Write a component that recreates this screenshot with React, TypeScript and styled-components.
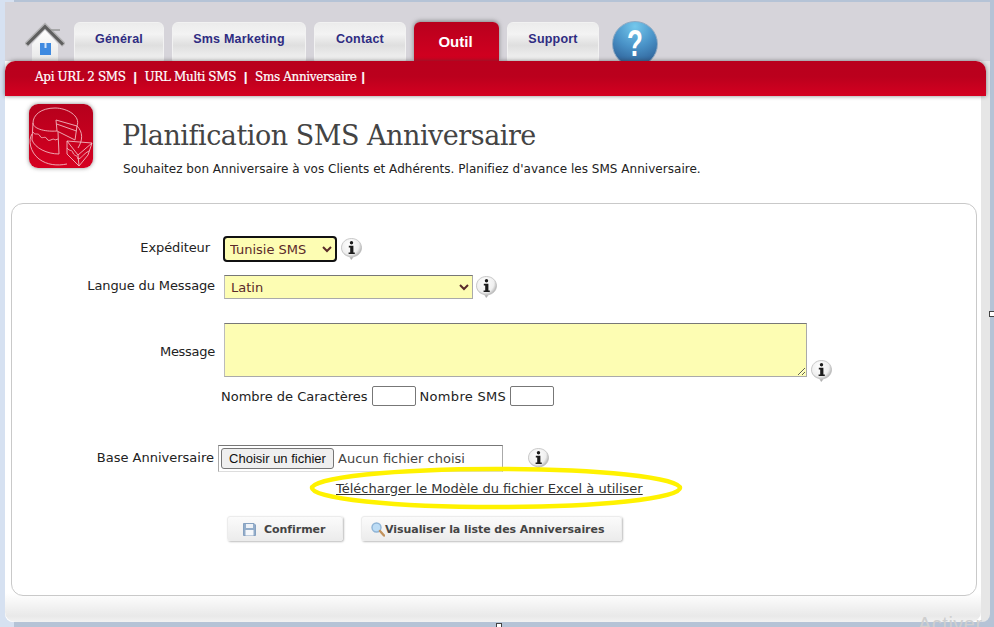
import React from "react";
import styled, { createGlobalStyle } from "styled-components";

const GlobalStyle = createGlobalStyle`
  html, body {
    margin: 0;
    padding: 0;
    background: #b5c3d6;
  }
`;

const Page = styled.div`
  position: relative;
  width: 994px;
  height: 627px;
  overflow: hidden;
  box-sizing: border-box;
  padding: 2px 4px 5px 5px;
  background: linear-gradient(90deg, #d6e1f1 0, #d6e1f1 14px, #b5c3d6 14px);
  font-family: "DejaVu Sans", Verdana, sans-serif;
  color: #222;
`;

const Shell = styled.div`
  height: 100%;
  display: flex;
  flex-direction: column;
  background: linear-gradient(90deg, #fff 0, #fff 976px, #e6e6e6 976px);
  border-radius: 0 0 8px 8px;
`;

const TopBar = styled.div`
  height: 59px;
  box-sizing: border-box;
  flex: none;
  display: flex;
  align-items: flex-start;
  padding: 20px 0 0 20px;
  background: #d6d4da;
`;

const HomeLink = styled.div`
  width: 40px;
  height: 39px;
  margin-right: 9px;
  flex: none;
`;

const Tab = styled.div<{ $width: number; $active?: boolean }>`
  width: ${(p) => p.$width}px;
  height: 39px;
  flex: none;
  box-sizing: border-box;
  margin-right: 8px;
  padding: ${(p) => (p.$active ? "12px 2px 0 0" : "9px 0 0")};
  text-align: center;
  font-family: "Liberation Sans", Arial, sans-serif;
  font-weight: 700;
  font-size: ${(p) => (p.$active ? 15 : 12.5)}px;
  letter-spacing: ${(p) => (p.$active ? 0 : 0.2)}px;
  line-height: 15px;
  color: ${(p) => (p.$active ? "#fff" : "#2f2c82")};
  border-radius: 6px 6px 0 0;
  border: ${(p) => (p.$active ? "none" : "1px solid #f2f2f2")};
  background: ${(p) =>
    p.$active
      ? "linear-gradient(180deg, #b8001d, #d30020)"
      : "linear-gradient(180deg, #ececec, #f3f3f3 30%, #dfdfdf 60%, #f2f2f2)"};
  box-shadow: ${(p) =>
    p.$active
      ? "0 -1px 4px rgba(60, 60, 60, 0.55)"
      : "0 1px 0 #2e6b2e"};
`;

const HelpBadge = styled.div`
  width: 46px;
  height: 46px;
  margin: -1px 0 0 5px;
  flex: none;
  border-radius: 50%;
  box-sizing: border-box;
  border: 1px solid #8fa9c2;
  background: radial-gradient(circle at 50% 10%, #74c8ec 0, #4a93c8 45%, #2f6299 85%);
  color: #fff;
  text-align: center;
  font-family: "Liberation Sans", Arial, sans-serif;
  font-weight: 700;
  font-size: 36px;
  line-height: 43px;
`;

const HelpMark = styled.span`
  display: inline-block;
  transform: scaleX(0.72);
`;

const RedBar = styled.nav`
  position: relative;
  height: 35px;
  flex: none;
  width: 981px;
  box-sizing: border-box;
  padding: 8px 0 0 30px;
  display: flex;
  border-radius: 10px 10px 0 0;
  background: linear-gradient(180deg, #b9001d 0, #bb001d 45%, #d40020 100%);
  box-shadow: 0 0 4px rgba(50, 50, 50, 0.6);
  font-family: "DejaVu Serif", Georgia, serif;
  font-size: 12px;
  line-height: 16px;
  font-weight: 400;
  color: #fff;
  -webkit-text-stroke: 0.2px #fff;
`;

const NavItem = styled.span`
  margin-right: 8px;
  letter-spacing: -0.35px;
  &::after {
    content: "|";
    margin-left: 8px;
    font-weight: 700;
    font-family: "Liberation Sans", sans-serif;
  }
  &:last-child::after {
    margin-left: 5px;
  }
`;

const Content = styled.div`
  flex: 1;
  width: 976px;
  box-sizing: border-box;
  padding: 7px 0 0 6px;
  display: flex;
  flex-direction: column;
  border-radius: 0 0 10px 10px;
  background: linear-gradient(180deg, #fff 0, #fff 497px, #e9e9e9 520px, #f2f2f2 100%);
`;

const TitleRow = styled.header`
  display: flex;
  height: 100px;
  flex: none;
`;

const CakeTile = styled.div`
  width: 64px;
  height: 64px;
  margin: 1px 0 0 18px;
  flex: none;
  border-radius: 9px;
  background: linear-gradient(180deg, #b5001c, #d60021);
  box-shadow: 0 0 4px rgba(60, 60, 60, 0.6);
`;

const TitleBlock = styled.div`
  margin-left: 29px;
  padding-top: 15px;
`;

const Title = styled.h1`
  margin: 0;
  font-family: "DejaVu Serif", Georgia, serif;
  font-weight: 400;
  font-size: 27px;
  line-height: 36px;
  letter-spacing: -0.48px;
  color: #444;
`;

const Subtitle = styled.p`
  margin: 7px 0 0 1px;
  font-size: 12px;
  line-height: 16px;
  letter-spacing: 0.03px;
  color: #222;
`;

const Panel = styled.form`
  position: relative;
  width: 966px;
  height: 393px;
  flex: none;
  box-sizing: border-box;
  border: 1px solid #c9c9c9;
  border-radius: 12px;
  padding-top: 33px;
  background: #fff;
`;

const Row = styled.div<{ $top?: number; $height: number }>`
  display: flex;
  align-items: center;
  margin-top: ${(p) => p.$top ?? 0}px;
  height: ${(p) => p.$height}px;
`;

const Label = styled.label<{ $end?: number; $raise?: number; $track?: number }>`
  width: ${(p) => p.$end ?? 203}px;
  flex: none;
  text-align: right;
  font-size: 13px;
  line-height: 16px;
  letter-spacing: ${(p) => p.$track ?? 0}px;
  color: #222;
  position: relative;
  top: ${(p) => -(p.$raise ?? 0)}px;
`;

const Field = styled.select<{ $width: number; $focus?: boolean }>`
  width: ${(p) => p.$width}px;
  height: 24px;
  margin-left: ${(p) => (p.$focus ? 14 : 9)}px;
  box-sizing: border-box;
  padding: 0 0 0 ${(p) => (p.$focus ? 1 : 2)}px;
  font-family: "DejaVu Sans", Verdana, sans-serif;
  font-size: 13px;
  color: #5a2a2a;
  background-color: #fdfdb3;
  border: 1px solid #aaa;
  border-top-color: #777;
  border-left-color: #bbb;
  border-radius: 0;
  ${(p) => p.$focus && "outline: 2px solid #111; outline-offset: -1px; border-radius: 3px;"}
`;

const MessageArea = styled.textarea`
  width: 583px;
  height: 54px;
  margin-left: 9px;
  box-sizing: border-box;
  display: block;
  background: #fdfdb3;
  border: 1px solid #aaa;
  border-top-color: #777;
  border-left-color: #bbb;
`;

const InfoSlot = styled.span<{ $left?: number; $down?: number }>`
  display: inline-flex;
  margin-left: ${(p) => p.$left ?? 3}px;
  position: relative;
  top: ${(p) => p.$down ?? 0}px;
`;

const CounterRow = styled.div`
  display: flex;
  align-items: center;
  height: 20px;
  margin: 9px 0 0 209px;
  font-size: 13px;
  color: #222;
  white-space: nowrap;
`;

const CounterText = styled.span<{ $track?: number }>`
  letter-spacing: ${(p) => p.$track ?? 0}px;
`;

const CountBox = styled.input<{ $after?: number }>`
  width: 44px;
  height: 20px;
  box-sizing: border-box;
  margin: 0 ${(p) => p.$after ?? 0}px 0 4px;
  border: 1px solid #777;
  border-radius: 2px;
  background: #fff;
`;

const FileBox = styled.div`
  width: 285px;
  height: 27px;
  margin-left: 4px;
  flex: none;
  box-sizing: border-box;
  display: flex;
  align-items: center;
  padding-left: 2px;
  border: 1px solid #aaa;
  border-top-color: #777;
  border-bottom-color: #ddd;
  font-size: 13px;
  color: #444;
`;

const FileButton = styled.button`
  width: 113px;
  height: 21px;
  padding: 0;
  margin-right: 4px;
  font-family: "Liberation Sans", Arial, sans-serif;
  font-size: 13px;
  color: #111;
  background: #efefef;
  border: 1px solid #767676;
  border-radius: 3px;
`;

const LinkRow = styled.div`
  margin: 7px 0 0 324px;
  height: 20px;
  font-size: 13px;
  line-height: 20px;
`;

const TemplateLink = styled.a`
  color: #333;
  text-decoration: underline;
`;

const Highlight = styled.svg`
  position: absolute;
  left: 296px;
  top: 261px;
  pointer-events: none;
`;

const Actions = styled.div`
  display: flex;
  margin: 17px 0 0 215px;
`;

const ActionButton = styled.button<{ $width: number; $inset: number; $after?: number }>`
  width: ${(p) => p.$width}px;
  height: 25px;
  margin-right: ${(p) => p.$after ?? 0}px;
  box-sizing: border-box;
  padding: 2px 0 0 ${(p) => p.$inset}px;
  display: flex;
  align-items: center;
  justify-content: flex-start;
  font-family: "DejaVu Sans", Verdana, sans-serif;
  font-weight: 700;
  font-size: 11px;
  letter-spacing: -0.05px;
  color: #444;
  border: 1px solid #ececec;
  border-radius: 3px;
  background: linear-gradient(180deg, #fbfbfb, #ececec);
  box-shadow: 1px 1px 2px #bdbdbd;
`;

const ResizeHandle = styled.span<{ $x: number; $y: number; $w: number; $h: number }>`
  position: absolute;
  left: ${(p) => p.$x}px;
  top: ${(p) => p.$y}px;
  width: ${(p) => p.$w}px;
  height: ${(p) => p.$h}px;
  box-sizing: border-box;
  background: #fff;
  border: 1px solid #444;
`;

const Watermark = styled.span`
  position: absolute;
  left: 918px;
  top: 612px;
  font-family: "Liberation Sans", Arial, sans-serif;
  font-size: 20px;
  line-height: 24px;
  letter-spacing: 0.5px;
  color: #cfcfcf;
`;

const HomeIcon = () => (
  <svg width="40" height="40" viewBox="0 0 40 40">
    <defs>
      <linearGradient id="wall" x1="0" y1="0" x2="0" y2="1">
        <stop offset="0" stopColor="#ffffff" />
        <stop offset="1" stopColor="#e6e6e6" />
      </linearGradient>
    </defs>
    <path d="M7 22 L20 8 L33 22 L33 40 L7 40 Z" fill="url(#wall)" />
    <rect x="24" y="7" width="11" height="2" fill="#9b9b9b" opacity="0.8" />
    <path d="M1 23 L20 4 L39 23" fill="none" stroke="#9a9a9a" strokeWidth="5" opacity="0.6" />
    <path d="M2 22.5 L20 4.5 L38 22.5" fill="none" stroke="#5f5f5f" strokeWidth="3" />
    <rect x="15" y="21" width="11" height="12" fill="#3f8ae0" />
    <rect x="19.5" y="21" width="2" height="5" fill="#cfe2f8" />
  </svg>
);

const CakeIcon = () => (
  <svg width="64" height="64" viewBox="0 0 64 64" fill="none" stroke="#f2b8c0" strokeWidth="0.9">
    <path d="M48 22 C52 12 38 4 26 4 C12 4 4 11 4 19 C4 24 14 28 28 27" />
    <path d="M27 16 L48 22 L46 36 L28 27 Z" />
    <path d="M27.6 20 L47.5 27" />
    <path d="M4 19 L3 36 C6 44 18 50 30 50 L29 28" />
    <path d="M4 28 C6 32 9 28 11 32 C13 36 16 31 18 35 C20 39 24 33 26 36 L29 35" />
    <path d="M3 30 C-1 36 1 48 10 55 C18 61 28 62 38 60" />
    <path d="M48 22 C54 28 54 36 49 44" />
    <path d="M38 37 L63 39 L49 51 Z" />
    <path d="M38 37 L38 50 L50 62 L49 51" />
    <path d="M63 39 L59 51 L50 62" />
    <path d="M38 44 C41 48 43 45 44 49 C46 53 48 50 49 55 C52 55 54 50 60 47" />
  </svg>
);

const InfoIcon = ({ id }: { id: string }) => (
  <svg width="21" height="22" viewBox="0 0 21 22">
    <defs>
      <radialGradient id={id} cx="0.42" cy="0.3" r="0.75">
        <stop offset="0" stopColor="#ffffff" />
        <stop offset="0.6" stopColor="#efefef" />
        <stop offset="1" stopColor="#8c8c8c" />
      </radialGradient>
    </defs>
    <path
      d="M10.5 0.5 C16.2 0.5 20.5 4.6 20.5 9.8 C20.5 14.6 16.6 18.2 12.5 18.6 L10.3 21.5 L8.5 18.5 C4.2 18 0.5 14.4 0.5 9.8 C0.5 4.6 4.8 0.5 10.5 0.5 Z"
      fill={`url(#${id})`}
      stroke="#b5b5b5"
      strokeWidth="0.7"
    />
    <circle cx="10.5" cy="4.8" r="1.7" fill="#1c1c1c" />
    <path d="M7.8 7.8 H12.4 V14.6 H13.8 V16 H7.6 V14.6 H9.2 V9.4 H7.8 Z" fill="#1c1c1c" />
  </svg>
);

const FloppyIcon = () => (
  <svg width="13" height="13" viewBox="0 0 13 13" style={{ marginRight: 8 }}>
    <path d="M0.5 0.5 H11 L12.5 2 V12.5 H0.5 Z" fill="#93adca" stroke="#86a1c0" />
    <rect x="3" y="1" width="7" height="4" fill="#eef2f7" />
    <rect x="2.5" y="7" width="8" height="5.5" fill="#f5f7fa" />
  </svg>
);

const MagnifierIcon = () => (
  <svg width="14" height="15" viewBox="0 0 14 15">
    <circle cx="5.5" cy="5.5" r="4.5" fill="#bcdcf5" stroke="#8fb4d6" strokeWidth="1.4" />
    <path d="M9 9 L13 13.5" stroke="#c2925c" strokeWidth="2.4" strokeLinecap="round" />
  </svg>
);

const App: React.FC = () => (
  <Page>
    <GlobalStyle />
    <Shell>
      <TopBar>
        <HomeLink>
          <HomeIcon />
        </HomeLink>
        <Tab $width={90}>Général</Tab>
        <Tab $width={134}>Sms Marketing</Tab>
        <Tab $width={92}>Contact</Tab>
        <Tab $width={85} $active>
          Outil
        </Tab>
        <Tab $width={92}>Support</Tab>
        <HelpBadge>
          <HelpMark>?</HelpMark>
        </HelpBadge>
      </TopBar>

      <RedBar>
        <NavItem>Api URL 2 SMS</NavItem>
        <NavItem>URL Multi SMS</NavItem>
        <NavItem>Sms Anniversaire</NavItem>
      </RedBar>

      <Content>
        <TitleRow>
          <CakeTile>
            <CakeIcon />
          </CakeTile>
          <TitleBlock>
            <Title>Planification SMS Anniversaire</Title>
            <Subtitle>
              Souhaitez bon Anniversaire à vos Clients et Adhérents. Planifiez d'avance les SMS
              Anniversaire.
            </Subtitle>
          </TitleBlock>
        </TitleRow>

        <Panel>
          <Row $height={24}>
            <Label $end={198} $raise={1} $track={-0.1}>
              Expéditeur
            </Label>
            <Field $width={112} $focus defaultValue="tunisie">
              <option value="tunisie">Tunisie SMS</option>
            </Field>
            <InfoSlot $left={5}>
              <InfoIcon id="info-sender" />
            </InfoSlot>
          </Row>
          <Row $top={14} $height={24}>
            <Label $raise={1} $track={-0.12}>
              Langue du Message
            </Label>
            <Field $width={249} defaultValue="latin">
              <option value="latin">Latin</option>
            </Field>
            <InfoSlot $left={3}>
              <InfoIcon id="info-lang" />
            </InfoSlot>
          </Row>
          <Row $top={24} $height={54}>
            <Label $raise={-2} $track={-0.28}>
              Message
            </Label>
            <MessageArea />
            <InfoSlot $left={4} $down={21}>
              <InfoIcon id="info-message" />
            </InfoSlot>
          </Row>
          <CounterRow>
            <CounterText>Nombre de Caractères</CounterText>
            <CountBox $after={4} />
            <CounterText $track={0.3}>Nombre SMS</CounterText>
            <CountBox />
          </CounterRow>
          <Row $top={39} $height={27}>
            <Label $end={202} $raise={1}>
              Base Anniversaire
            </Label>
            <FileBox>
              <FileButton type="button">Choisir un fichier</FileButton>
              Aucun fichier choisi
            </FileBox>
            <InfoSlot $left={25}>
              <InfoIcon id="info-file" />
            </InfoSlot>
          </Row>
          <LinkRow>
            <TemplateLink href="#modele">Télécharger le Modèle du fichier Excel à utiliser</TemplateLink>
          </LinkRow>
          <Highlight width="376" height="46" viewBox="0 0 376 46">
            <ellipse cx="188" cy="23" rx="184" ry="19" fill="none" stroke="#fff200" strokeWidth="4.5" />
          </Highlight>
          <Actions>
            <ActionButton type="button" $width={116} $inset={15} $after={18}>
              <FloppyIcon />
              Confirmer
            </ActionButton>
            <ActionButton type="button" $width={261} $inset={9}>
              <MagnifierIcon />
              Visualiser la liste des Anniversaires
            </ActionButton>
          </Actions>
        </Panel>
      </Content>
    </Shell>
    <Watermark>Activer</Watermark>
    <ResizeHandle $x={989} $y={311} $w={8} $h={6} />
    <ResizeHandle $x={496} $y={623} $w={6} $h={8} />
  </Page>
);

export default App;
